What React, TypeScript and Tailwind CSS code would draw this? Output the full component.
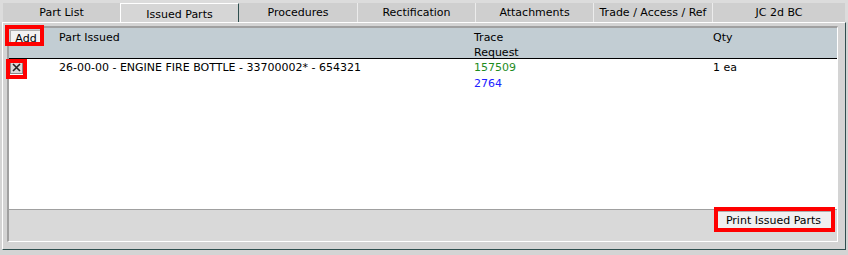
import React from "react";

function Tab({ label, w, sep }: { label: string; w: string; sep?: boolean }) {
  return (
    <div
      className={`${w} h-[19px] bg-[#cfcfcf] flex justify-center pt-[2px] ${sep ? "border-l border-[#ececec]" : ""}`}
    >
      {label}
    </div>
  );
}

export default function App() {
  return (
    <div className="relative w-[848px] h-[255px] overflow-hidden bg-[#d4d4d4] text-[11px] leading-[15px] text-black font-['Tahoma','DejaVu_Sans',sans-serif]">
      {/* tab strip */}
      <div className="flex h-[22px] pt-[3px] pl-[3px] pr-[3px] bg-[#dcdcdc]">
        <Tab label="Part List" w="w-[117px]" />
        <div className="w-[119px] h-[19px] bg-[#d6d6d6] border-t border-l border-white border-r border-r-[#2f4f4f] flex justify-center pt-[3px]">
          Issued Parts
        </div>
        <Tab label="Procedures" w="w-[118px]" />
        <Tab label="Rectification" w="w-[118px]" sep />
        <Tab label="Attachments" w="w-[118px]" sep />
        <Tab label="Trade / Access / Ref" w="w-[119px]" sep />
        <div className="flex-1 h-[19px] bg-[#cfcfcf] border-l border-[#ececec] flex justify-center pt-[2px]">
          JC 2d BC
        </div>
      </div>

      {/* panel */}
      <div className="ml-[2px] w-[844px] h-[228px] bg-[#d4d4d4] border border-white border-r-[#2f4f4f] border-b-[#2f4f4f] pl-[4px] pt-[3px] pr-[7px] pb-[7px]">
        <div className="h-full flex flex-col border-l-2 border-t-2 border-[#a0a0a0] border-r border-b border-r-white border-b-white">
          {/* header */}
          <div className="h-[31px] bg-[#c2cdd3] border-b border-black grid grid-cols-[50px_415px_239px_1fr] pt-[2px]">
            <div>
              <div className="ml-[1px] w-[32px] h-[16px] bg-[#f2f2f2] border border-[#adadad] flex items-center justify-center">
                Add
              </div>
            </div>
            <div>Part Issued</div>
            <div>
              <div>Trace</div>
              <div>Request</div>
            </div>
            <div>Qty</div>
          </div>

          {/* list */}
          <div className="flex-1 bg-white grid grid-cols-[50px_415px_239px_1fr] content-start pt-[1px]">
            <div>
              <div className="ml-[1px] mt-[1px] w-[13px] h-[13px] bg-[#d9d9d9] border border-[#888888] flex items-center justify-center">
                <svg width="9" height="9" viewBox="0 0 9 9">
                  <path d="M1 1 L8 8 M8 1 L1 8" stroke="#222" strokeWidth="1.6" />
                </svg>
              </div>
            </div>
            <div>26-00-00 - ENGINE FIRE BOTTLE - 33700002* - 654321</div>
            <div>
              <div className="text-[#1e8c1e]">157509</div>
              <div className="text-[#2020ff] mt-[1px]">2764</div>
            </div>
            <div>1 ea</div>
          </div>

          {/* footer */}
          <div className="h-[32px] bg-[#d9d9d9] border-t border-[#a0a0a0] flex justify-end pt-[1px] pr-[5px]">
            <div className="w-[117px] h-[19px] bg-[#f0f0f0] border border-[#adadad] flex items-center justify-center">
              Print Issued Parts
            </div>
          </div>
        </div>
      </div>

      {/* red annotation overlays */}
      <div className="absolute left-[5px] top-[25px] w-[39px] h-[21px] border-[4px] border-[#ff0000]" />
      <div className="absolute left-[6px] top-[59px] w-[21px] h-[20px] border-[4px] border-[#ff0000]" />
      <div className="absolute left-[714px] top-[207px] w-[121px] h-[25px] border-[4px] border-[#ff0000]" />
    </div>
  );
}
